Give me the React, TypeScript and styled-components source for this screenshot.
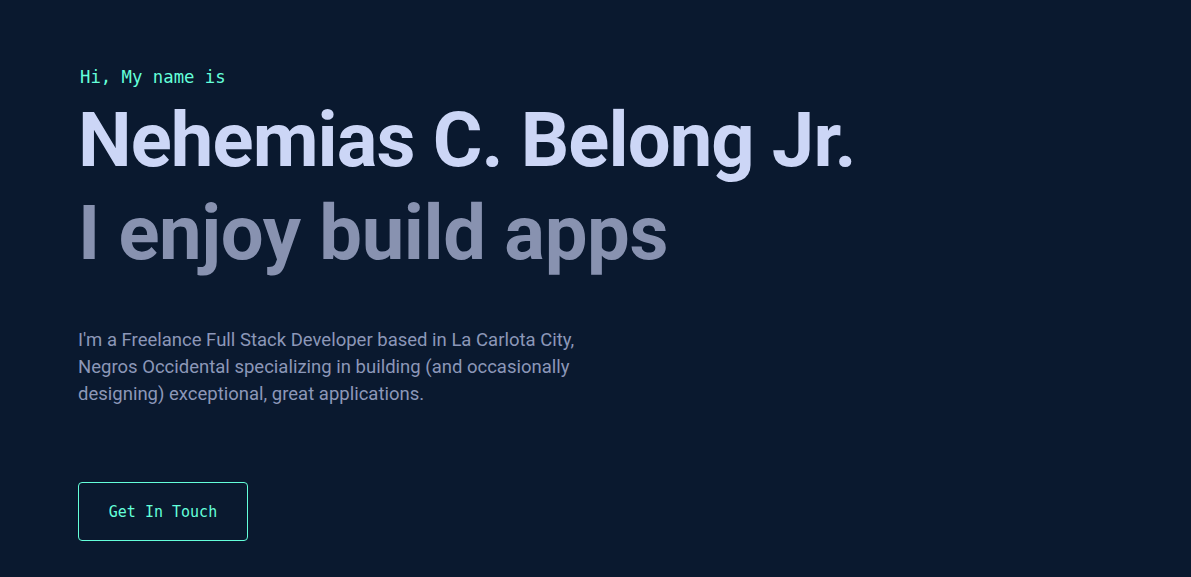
import React from "react";
import styled, { createGlobalStyle } from "styled-components";

const GlobalStyle = createGlobalStyle`
  html, body { margin: 0; padding: 0; background: #0a192f; }
  body { font-family: Roboto, "Liberation Sans", sans-serif; -webkit-font-smoothing: antialiased; }
  * { box-sizing: border-box; }
`;

const Hero = styled.section`
  min-height: 577px;
  padding: 65px 0 0 78px;
  display: flex;
  flex-direction: column;
  align-items: flex-start;
  background: #0a192f;
`;

const Intro = styled.h1`
  margin: 0 0 0 2px;
  font-family: "DejaVu Sans Mono", "Liberation Mono", monospace;
  font-size: 17.3px;
  font-weight: 400;
  line-height: 24px;
  color: #64ffda;
`;

const Names = styled.div`
  margin-top: 5px;
  display: flex;
  flex-direction: column;
`;

const BigHeading = styled.h2<{ $muted?: boolean }>`
  margin: 0;
  font-family: Roboto, "Liberation Sans", sans-serif;
  font-weight: 700;
  font-size: 76px;
  line-height: 93px;
  letter-spacing: ${(p) => (p.$muted ? "-0.35px" : "-0.9px")};
  white-space: nowrap;
  color: ${(p) => (p.$muted ? "#8892b0" : "#ccd6f6")};
`;

const Blurb = styled.p`
  margin: 47px 0 0;
  max-width: 540px;
  font-family: Roboto, "Liberation Sans", sans-serif;
  font-size: 18.5px;
  line-height: 27px;
  color: #8c97b8;
`;

const Button = styled.a`
  margin-top: 74px;
  display: inline-flex;
  align-items: center;
  justify-content: center;
  width: 170px;
  height: 59px;
  border: 1px solid #64ffda;
  border-radius: 4px;
  font-family: "DejaVu Sans Mono", "Liberation Mono", monospace;
  font-size: 15px;
  color: #64ffda;
  text-decoration: none;
`;

export default function App() {
  return (
    <>
      <GlobalStyle />
      <Hero>
        <Intro>Hi, My name is</Intro>
        <Names>
          <BigHeading>Nehemias C. Belong Jr.</BigHeading>
          <BigHeading $muted>I enjoy build apps</BigHeading>
        </Names>
        <Blurb>
          I'm a Freelance Full Stack Developer based in La Carlota City, Negros
          Occidental specializing in building (and occasionally designing)
          exceptional, great applications.
        </Blurb>
        <Button href="#">Get In Touch</Button>
      </Hero>
    </>
  );
}
